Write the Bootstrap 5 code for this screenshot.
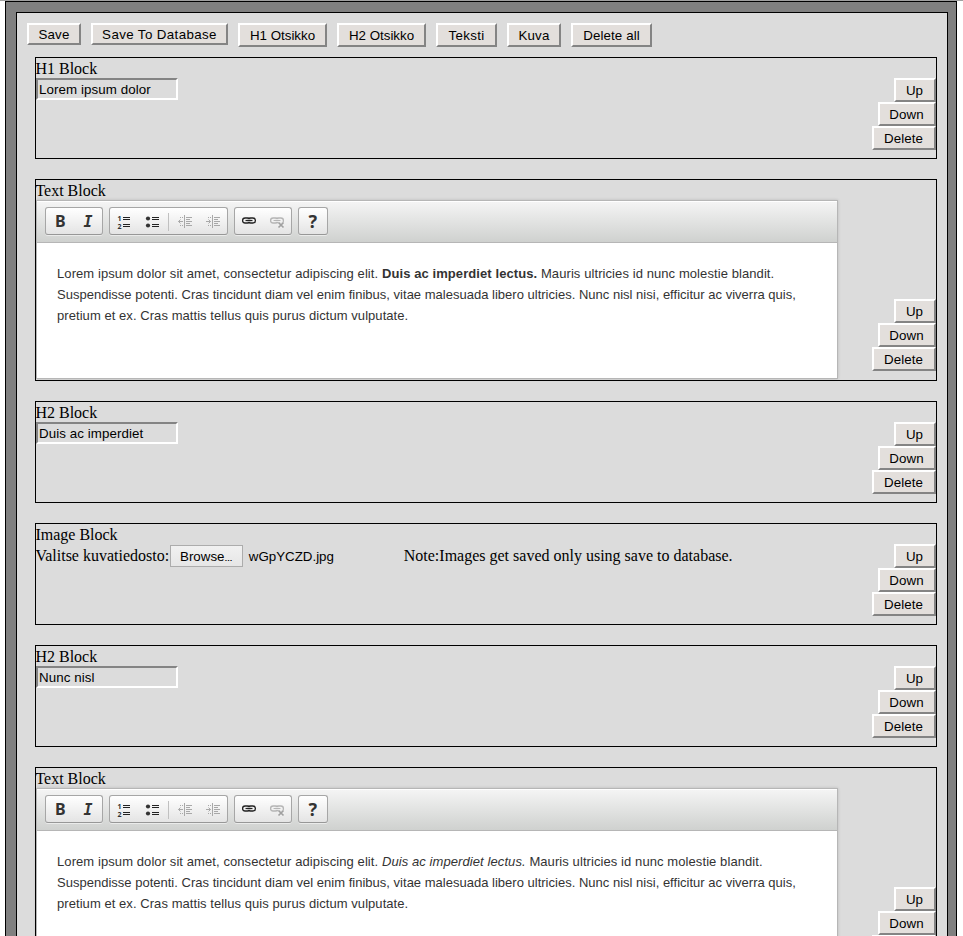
<!DOCTYPE html>
<html lang="fi">
<head>
<meta charset="utf-8">
<title>Block editor</title>
<link rel="stylesheet" href="https://cdn.jsdelivr.net/npm/bootstrap@5.3.0/dist/css/bootstrap.min.css">
<style>
html{overflow:hidden}
body{height:936px;overflow:hidden;background:#fff;color:#000;font:16px/20px "Liberation Serif",serif;border-top:1px solid #a0a0a0;padding:0 6px 0 5px}
.frame{width:952px;height:935px;overflow:hidden;background:#808080;border:1px solid #000;border-bottom:0;padding:10px 8px 0 10px}
.sheet{width:932px;height:924px;overflow:hidden;background:#dcdcdc;border:1px solid #000;border-bottom:0;padding:10px 10px 0}
.tools{height:34px;gap:10px}
.classic{height:24px;padding:2px 0 0;border:2px solid;border-color:#fff #848484 #848484 #fff;border-radius:0;background:#e3dfdc;color:#000;font:13.33px/18px "Liberation Sans",sans-serif;letter-spacing:.1px;white-space:nowrap;text-align:center}
.short{height:22px;line-height:16px}
.w-save{width:54px}.w-db{width:137px;letter-spacing:.38px}.w-h{width:89px;letter-spacing:0}.w-txt{width:61px;letter-spacing:.3px}.w-all{width:81px}
.w-up{width:42px}.w-down{width:58px}.w-del{width:64px}
.side .classic{padding-right:1px}
.block{width:902px;height:102px;margin:0 0 20px 8px;border:1px solid #000}
.block.tall{height:202px}
.caption{height:20px;padding-top:1px;margin-left:-.6px;white-space:nowrap}
.side{padding-bottom:8px}
.tall .side{padding-bottom:9px}
.field{width:142px;height:22px;border:2px solid;border-color:#848484 #fff #fff #848484;border-radius:0;background:#dcdcdc;color:#000;padding:0 1px;font:13.33px/18px "Liberation Sans",sans-serif;letter-spacing:.08px;outline:0}
.filerow{margin-left:-.6px;line-height:24px}
.browse{width:73px;height:22px;margin:1px 6px 0 .6px;border:1px solid #acacac;background:linear-gradient(#f1f1f1,#e6e6e6);font:13.33px/21px "Liberation Sans",sans-serif;text-align:center}
.browse small{font-size:8px;line-height:1;font-weight:700}
.filename{width:155px;margin-top:1px;font:13.33px/23px "Liberation Sans",sans-serif}
.editor{width:802px;height:179px;border:1px solid #b6b6b6;background:#fff;box-shadow:0 0 3px rgba(0,0,0,.15)}
.bar{height:42px;padding:6px 8px 0;gap:6px;border-bottom:1px solid #b6b6b6;background:linear-gradient(#f5f5f5,#cfd1cf);box-shadow:inset 0 1px 0 #fff}
.set{height:28px;border:1px solid #a6a6a6;border-bottom-color:#979797;border-radius:3px;background:linear-gradient(#fff,#e4e4e4);box-shadow:0 1px 0 rgba(255,255,255,.5)}
.set svg{display:block;fill:none}
.set text{fill:#333;font-family:"Noto Sans",sans-serif;font-weight:700}
.copy{padding:20px;color:#333;font:13px/21px "Liberation Sans",sans-serif;white-space:nowrap}
.copy p{margin:0}
.l1{letter-spacing:.085px}.l2{letter-spacing:.01px}.l3{letter-spacing:.06px}
</style>
<script src="https://cdn.jsdelivr.net/npm/bootstrap@5.3.0/dist/js/bootstrap.bundle.min.js"></script>
</head>
<body>
<div class="frame">
<main class="sheet">
<div class="tools d-flex align-items-start">
<button class="classic short w-save">Save</button><button class="classic short w-db">Save To Database</button><button class="classic w-h">H1 Otsikko</button><button class="classic w-h">H2 Otsikko</button><button class="classic w-txt">Teksti</button><button class="classic w-save">Kuva</button><button class="classic w-all">Delete all</button>
</div>
<div id="blocks"></div>
</main>
</div>
<script>
const side='<div class="side d-flex flex-column align-items-end justify-content-end"><button class="classic w-up">Up</button><button class="classic w-down">Down</button><button class="classic w-del">Delete</button></div>';
const chain='<rect x="7.600" y="10" width="7.400" height="5" rx="2.500"/><rect x="13" y="10" width="7.400" height="5" rx="2.500"/><path d="M10.500 12.500h7" stroke="#fff" stroke-width="2.600"/><path d="M10.500 12.500h7"/>';
const indentLines='<path d="M74.500 7v13M76 9.500h6M76 11.500h4M76 13.500h6M76 15.500h4M76 17.500h6"/><path d="M70 9.500h4M70 17.500h4" stroke-dasharray="1 1"/>';
const bar=`<div class="bar d-flex">
<div class="set"><svg width="56" height="26"><text x="9" y="19" font-size="16">B</text><text x="37.500" y="19" style="font-family:'DejaVu Sans Mono',monospace" font-size="15" font-style="italic">I</text></svg></div>
<div class="set"><svg width="117" height="26">
<path stroke="#222" stroke-width="1.200" d="M13 9.500h7M13 11.500h7M13 16.500h7M13 18.500h7M42 9.500h7M42 11.500h7M42 16.500h7M42 18.500h7"/>
<text x="7.500" y="13" font-size="7">1</text><text x="7.500" y="20.500" font-size="7">2</text>
<circle cx="38" cy="10.500" r="2.100" fill="#333"/><circle cx="38" cy="17.500" r="2.100" fill="#333"/>
<path d="M58.500 5v18" stroke="#c0c0c0"/>
<g stroke="#a8a8a8">${indentLines}<path d="M73 13.500h-4.500M70.500 11.500l-2 2 2 2"/></g>
<g stroke="#a8a8a8" transform="translate(28 0)">${indentLines}<path d="M68 13.500h4.500M70.500 11.500l2 2-2 2"/></g></svg></div>
<div class="set"><svg width="56" height="26"><g stroke="#222" stroke-width="1.300">${chain}</g><g stroke="#b5b5b5" stroke-width="1.300" transform="translate(28 0)">${chain}</g><path d="M43.500 14.500l5 5M48.500 14.500l-5 5" stroke="#eee" stroke-width="3.500"/><path d="M43.500 14.500l5 5M48.500 14.500l-5 5" stroke="#a0a0a0" stroke-width="1.700"/></svg></div>
<div class="set"><svg width="28" height="26"><text x="9.500" y="19.500" font-size="18">?</text></svg></div></div>`;
const field=v=>`<input class="field d-block" value="${v}" aria-label="Otsikko">`;
const editor=t=>`<div class="editor">${bar}<div class="copy"><p class="l1">Lorem ipsum dolor sit amet, consectetur adipiscing elit. ${t} Mauris ultricies id nunc molestie blandit.</p><p class="l2">Suspendisse potenti. Cras tincidunt diam vel enim finibus, vitae malesuada libero ultricies. Nunc nisl nisi, efficitur ac viverra quis,</p><p class="l3">pretium et ex. Cras mattis tellus quis purus dictum vulputate.</p></div></div>`;
const file='<div class="filerow d-flex"><span>Valitse kuvatiedosto:</span><span class="browse">Browse<small>…</small></span><span class="filename">wGpYCZD.jpg</span><span>Note:Images get saved only using save to database.</span></div>';
const rows=[['H1 Block',field('Lorem ipsum dolor')],['Text Block',editor('<b>Duis ac imperdiet lectus.</b>'),'tall'],['H2 Block',field('Duis ac imperdiet')],['Image Block',file],['H2 Block',field('Nunc nisl')],['Text Block',editor('<i>Duis ac imperdiet lectus.</i>'),'tall']];
document.getElementById('blocks').innerHTML=rows.map(([c,b,k=''])=>`<section class="block ${k} d-flex justify-content-between"><div><div class="caption">${c}</div>${b}</div>${side}</section>`).join('');
</script>
</body>
</html>
